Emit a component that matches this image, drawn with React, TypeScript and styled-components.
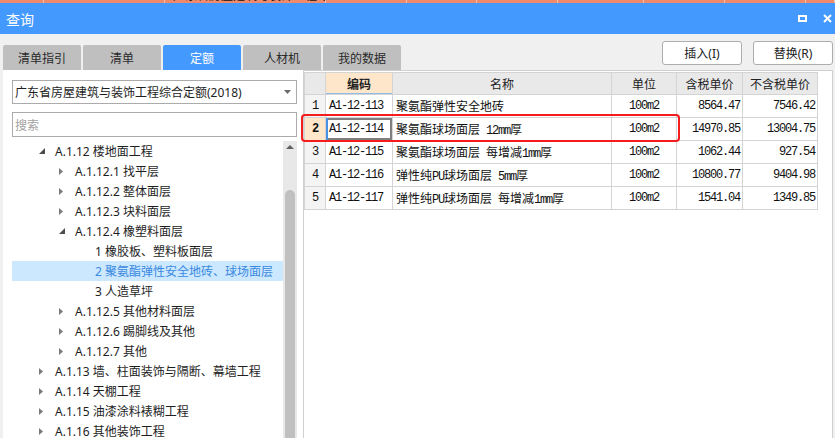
import React from "react";
import styled, { createGlobalStyle } from "styled-components";

const GlobalStyle = createGlobalStyle`
  html, body { margin: 0; padding: 0; background: #f0f0f0; }
  body { font-family: "Noto Sans", "Noto Sans CJK SC", sans-serif; }
  #root { width: 835px; height: 438px; }
  * { box-sizing: border-box; }
`;

const Window = styled.div`
  width: 835px;
  height: 438px;
  overflow: hidden;
  display: flex;
  flex-direction: column;
  background: #f0f0f0;
  font-family: "Noto Sans", "Noto Sans CJK SC", sans-serif;
  font-size: 12px;
  color: #1e1e1e;
`;

const TopStrip = styled.div`
  height: 3px;
  flex: none;
  display: flex;
  background: #f08a6c;
  overflow: hidden;
`;

const StripCell = styled.div<{ $w: number }>`
  width: ${(p) => p.$w}px;
  flex: none;
  height: 3px;
  border-right: 1px solid #f6c2b0;
  overflow: hidden;
`;

const StripText = styled.span`
  display: block;
  margin-top: -10px;
  padding-left: 8px;
  font-size: 12px;
  line-height: 12px;
  color: #111;
  white-space: nowrap;
`;

const TitleBar = styled.div`
  height: 31px;
  flex: none;
  background: #4499ff;
  display: flex;
  align-items: center;
  padding: 0 3px 0 6px;
  color: #fff;
`;

const Title = styled.span`
  font-family: "Noto Sans CJK SC", sans-serif;
  font-size: 14px;
  line-height: 16px;
`;

const WinControls = styled.div`
  margin-left: auto;
  display: flex;
  align-items: center;
  gap: 16px;
`;

const Toolbar = styled.div`
  height: 36px;
  flex: none;
  display: flex;
  padding: 0 2px 0 3px;
`;

const Tabs = styled.div`
  display: flex;
  gap: 2px;
  align-self: flex-end;
`;

const Tab = styled.div<{ $active?: boolean }>`
  width: 78px;
  height: 25px;
  display: flex;
  align-items: center;
  justify-content: center;
  background: ${(p) => (p.$active ? "#4499ff" : "#bfbfbf")};
  color: ${(p) => (p.$active ? "#ffffff" : "#2a2a2a")};
  border-radius: 2px 2px 0 0;
  font-family: "Noto Sans CJK SC", sans-serif;
  font-size: 12px;
`;

const Actions = styled.div`
  margin-left: auto;
  display: flex;
  gap: 11px;
  padding-top: 7px;
`;

const ActionButton = styled.button`
  width: 80px;
  height: 24px;
  background: #fff;
  border: 1px solid #adadad;
  border-radius: 3px;
  font-family: "Noto Sans", "Noto Sans CJK SC", sans-serif;
  font-size: 12px;
  color: #222;
  padding: 0;
`;

const Content = styled.div`
  flex: 1;
  min-height: 0;
  display: flex;
  padding: 0 2px 0 3px;
`;

const LeftPanel = styled.div`
  width: 300px;
  flex: none;
  background: #fff;
  padding: 10px 6px 0 9px;
  display: flex;
  flex-direction: column;
`;

const Dropdown = styled.div`
  height: 24px;
  flex: none;
  border: 1px solid #ababab;
  display: flex;
  align-items: center;
  padding: 0 5px 0 2px;
  font-size: 12px;
  color: #1e1e1e;
  white-space: nowrap;
`;

const Caret = styled.svg`
  margin-left: auto;
`;

const SearchBox = styled.div`
  height: 25px;
  flex: none;
  margin-top: 8px;
  border: 1px solid #ababab;
  display: flex;
  align-items: center;
  padding: 0 2px;
  font-family: "Noto Sans CJK SC", sans-serif;
  color: #a2a2a2;
`;

const TreeArea = styled.div`
  flex: 1;
  min-height: 0;
  margin-top: 4px;
  display: flex;
`;

const TreeList = styled.div`
  flex: 1;
  overflow: hidden;
`;

const TreeRow = styled.div<{ $level: number; $selected?: boolean }>`
  height: 20px;
  display: flex;
  align-items: center;
  padding-left: ${(p) => 27 + p.$level * 20}px;
  background: ${(p) => (p.$selected ? "#cce8ff" : "transparent")};
  color: ${(p) => (p.$selected ? "#3a88e0" : "#1e1e1e")};
  white-space: nowrap;
  font-size: 12px;
`;

const ArrowBox = styled.span`
  width: 16px;
  flex: none;
  display: flex;
  align-items: center;
`;

const Scrollbar = styled.div`
  width: 14px;
  flex: none;
  background: #e8e8e8;
  display: flex;
  flex-direction: column;
  align-items: center;
  padding-top: 4px;
`;

const Thumb = styled.div`
  width: 10px;
  flex: 1;
  margin-top: 41px;
  background: #c0c0c0;
  border-radius: 5px 5px 0 0;
`;

const RightPanel = styled.div`
  flex: 1;
  position: relative;
  background: #fff;
  border: 1px solid #cfcfcf;
  border-bottom: none;
  padding-top: 1px;
`;

const Grid = styled.table`
  border-collapse: collapse;
  table-layout: fixed;
  width: 513px;
  font-family: "Liberation Mono", "Noto Sans CJK SC", monospace;
  font-size: 12px;
  color: #111;
`;

const Col = styled.col<{ $w: number }>`
  width: ${(p) => p.$w}px;
`;

const HeadCell = styled.th<{ $active?: boolean }>`
  height: 22px;
  padding: 0 2px;
  border: 1px solid #d4d4d4;
  background: ${(p) => (p.$active ? "#fde6ca" : "#e9e9e9")};
  font-family: "Noto Sans CJK SC", sans-serif;
  font-weight: ${(p) => (p.$active ? 700 : 400)};
  font-size: 12px;
  color: #222;
  text-align: center;
  white-space: nowrap;
  overflow: hidden;
  box-shadow: ${(p) => (p.$active ? "inset 0 -1px 0 #8cbbe8" : "none")};
`;

const RowNum = styled.td<{ $active?: boolean }>`
  height: 23px;
  border: 1px solid #d4d4d4;
  background: ${(p) => (p.$active ? "#fde6ca" : "#f4f4f4")};
  font-weight: ${(p) => (p.$active ? 700 : 400)};
  text-align: center;
  padding: 0;
`;

const Cell = styled.td<{ $align?: "left" | "center" | "right"; $focused?: boolean }>`
  height: 23px;
  border: 1px solid #d4d4d4;
  padding: 0 ${(p) => (p.$align === "right" ? 2 : 3)}px 0 3px;
  text-align: ${(p) => p.$align || "left"};
  white-space: nowrap;
  overflow: hidden;
  box-shadow: ${(p) =>
    p.$focused ? "inset 2px 0 0 #4a90e2, inset 0 0 0 2px #7f7f7f" : "none"};
`;

const Latin = styled.span`
  font-family: "Liberation Mono", monospace;
  letter-spacing: -1.2px;
  white-space: pre;
`;

const Highlight = styled.div`
  position: absolute;
  left: -3px;
  top: 43px;
  width: 379px;
  height: 28px;
  border: 2px solid #f31d1d;
  border-radius: 4px;
  pointer-events: none;
`;

const mixed = (s: string) =>
  s
    .split(/([\x00-\x7F]+)/)
    .filter(Boolean)
    .map((part, i) =>
      /^[\x00-\x7F]+$/.test(part) ? (
        <Latin key={i}>{part}</Latin>
      ) : (
        <span key={i}>{part}</span>
      )
    );

type Node = { text: string; level: number; state: "open" | "closed" | "leaf"; selected?: boolean };

const tree: Node[] = [
  { text: "A.1.12 楼地面工程", level: 0, state: "open" },
  { text: "A.1.12.1 找平层", level: 1, state: "closed" },
  { text: "A.1.12.2 整体面层", level: 1, state: "closed" },
  { text: "A.1.12.3 块料面层", level: 1, state: "closed" },
  { text: "A.1.12.4 橡塑料面层", level: 1, state: "open" },
  { text: "1 橡胶板、塑料板面层", level: 2, state: "leaf" },
  { text: "2 聚氨酯弹性安全地砖、球场面层", level: 2, state: "leaf", selected: true },
  { text: "3 人造草坪", level: 2, state: "leaf" },
  { text: "A.1.12.5 其他材料面层", level: 1, state: "closed" },
  { text: "A.1.12.6 踢脚线及其他", level: 1, state: "closed" },
  { text: "A.1.12.7 其他", level: 1, state: "closed" },
  { text: "A.1.13 墙、柱面装饰与隔断、幕墙工程", level: 0, state: "closed" },
  { text: "A.1.14 天棚工程", level: 0, state: "closed" },
  { text: "A.1.15 油漆涂料裱糊工程", level: 0, state: "closed" },
  { text: "A.1.16 其他装饰工程", level: 0, state: "closed" },
];

const rows = [
  ["A1-12-113", "聚氨酯弹性安全地砖", "100m2", "8564.47", "7546.42"],
  ["A1-12-114", "聚氨酯球场面层 12mm厚", "100m2", "14970.85", "13004.75"],
  ["A1-12-115", "聚氨酯球场面层 每增减1mm厚", "100m2", "1062.44", "927.54"],
  ["A1-12-116", "弹性纯PU球场面层 5mm厚", "100m2", "10800.77", "9404.98"],
  ["A1-12-117", "弹性纯PU球场面层 每增减1mm厚", "100m2", "1541.04", "1349.85"],
];

const strip = [44, 121, 161, 81, 70, 81, 86, 81, 81, 29];

const Arrow = ({ state }: { state: Node["state"] }) => (
  <ArrowBox>
    {state === "open" && (
      <svg width="6" height="6" viewBox="0 0 6 6">
        <polygon points="6,0 6,6 0,6" fill="#4d4d4d" />
      </svg>
    )}
    {state === "closed" && (
      <svg width="4" height="7" viewBox="0 0 4 7">
        <polygon points="0,0 4,3.5 0,7" fill="#7a7a7a" />
      </svg>
    )}
  </ArrowBox>
);

export default function App() {
  return (
    <>
      <GlobalStyle />
      <Window>
        <TopStrip>
          {strip.map((w, i) => (
            <StripCell key={i} $w={w}>
              {i === 2 && <StripText>广东省房屋建筑与装饰工程综合定额</StripText>}
            </StripCell>
          ))}
        </TopStrip>
        <TitleBar>
          <Title>查询</Title>
          <WinControls>
            <svg width="9" height="7" viewBox="0 0 9 7">
              <rect x="1" y="1" width="7" height="5" fill="none" stroke="#fff" strokeWidth="2" />
            </svg>
            <svg width="9" height="9" viewBox="0 0 9 9">
              <path d="M1 1 L8 8 M8 1 L1 8" stroke="#fff" strokeWidth="2" />
            </svg>
          </WinControls>
        </TitleBar>
        <Toolbar>
          <Tabs>
            <Tab>清单指引</Tab>
            <Tab>清单</Tab>
            <Tab $active>定额</Tab>
            <Tab>人材机</Tab>
            <Tab>我的数据</Tab>
          </Tabs>
          <Actions>
            <ActionButton>插入(I)</ActionButton>
            <ActionButton>替换(R)</ActionButton>
          </Actions>
        </Toolbar>
        <Content>
          <LeftPanel>
            <Dropdown>
              广东省房屋建筑与装饰工程综合定额(2018)
              <Caret width="7" height="4" viewBox="0 0 7 4">
                <polygon points="0,0 7,0 3.5,4" fill="#6a6a6a" />
              </Caret>
            </Dropdown>
            <SearchBox>搜索</SearchBox>
            <TreeArea>
              <TreeList>
                {tree.map((n, i) => (
                  <TreeRow key={i} $level={n.level} $selected={n.selected}>
                    <Arrow state={n.state} />
                    {n.text}
                  </TreeRow>
                ))}
              </TreeList>
              <Scrollbar>
                <svg width="8" height="4" viewBox="0 0 8 4">
                  <polygon points="0,4 8,4 4,0" fill="#606060" />
                </svg>
                <Thumb />
              </Scrollbar>
            </TreeArea>
          </LeftPanel>
          <RightPanel>
            <Grid>
              <colgroup>
                <Col $w={21} />
                <Col $w={67} />
                <Col $w={219} />
                <Col $w={65} />
                <Col $w={66} />
                <Col $w={75} />
              </colgroup>
              <thead>
                <tr>
                  <HeadCell />
                  <HeadCell $active>编码</HeadCell>
                  <HeadCell>名称</HeadCell>
                  <HeadCell>单位</HeadCell>
                  <HeadCell>含税单价</HeadCell>
                  <HeadCell>不含税单价</HeadCell>
                </tr>
              </thead>
              <tbody>
                {rows.map((r, i) => (
                  <tr key={i}>
                    <RowNum $active={i === 1}>
                      <Latin>{i + 1}</Latin>
                    </RowNum>
                    <Cell $focused={i === 1}>{mixed(r[0])}</Cell>
                    <Cell>{mixed(r[1])}</Cell>
                    <Cell $align="center">{mixed(r[2])}</Cell>
                    <Cell $align="right">{mixed(r[3])}</Cell>
                    <Cell $align="right">{mixed(r[4])}</Cell>
                  </tr>
                ))}
              </tbody>
            </Grid>
            <Highlight />
          </RightPanel>
        </Content>
      </Window>
    </>
  );
}
